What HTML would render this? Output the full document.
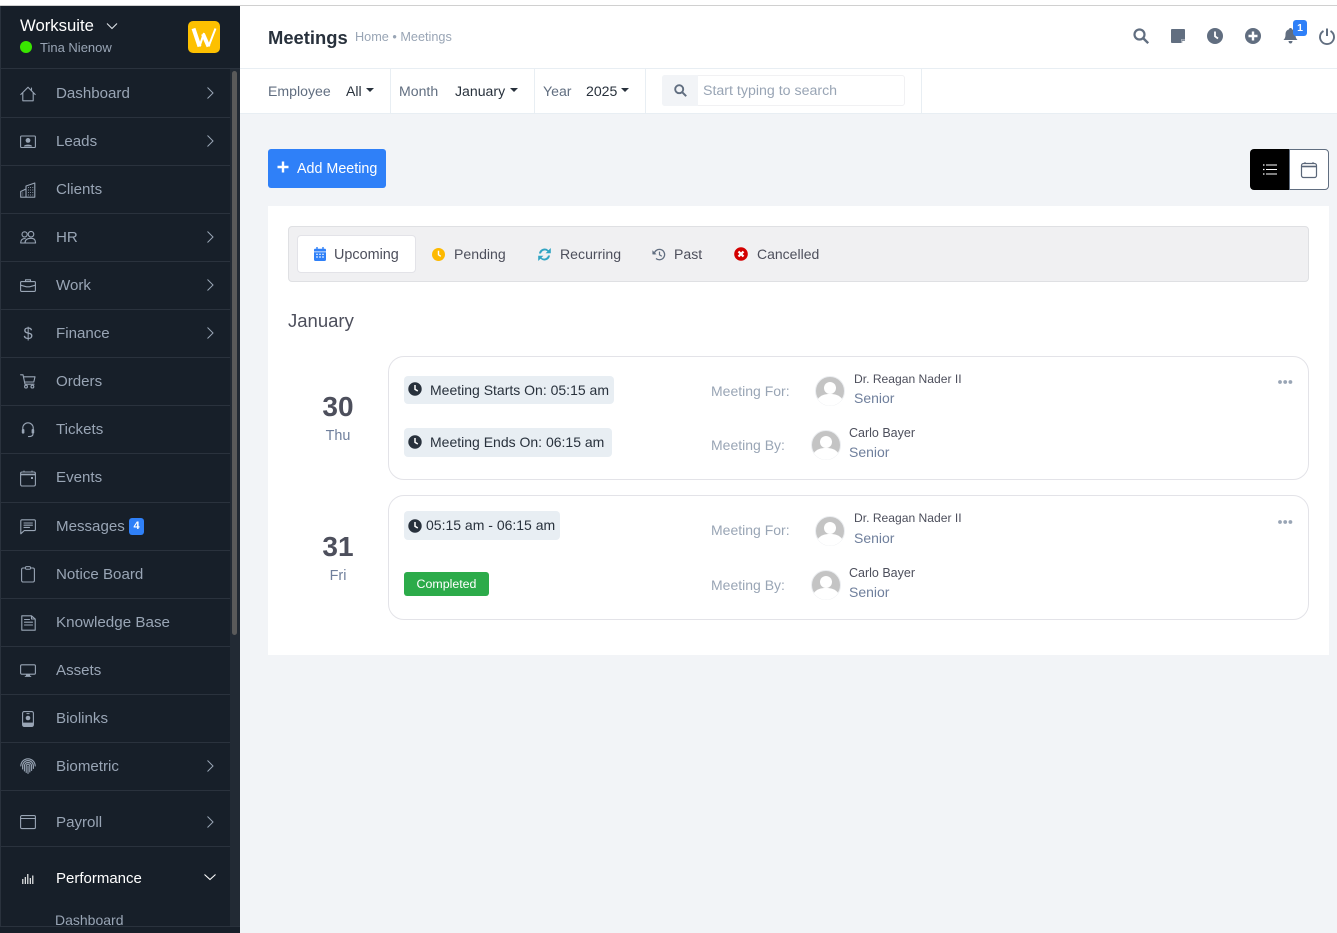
<!DOCTYPE html>
<html><head><meta charset="utf-8"><title>Meetings</title>
<style>
html,body{margin:0;padding:0;background:#f2f4f7}
body{width:1337px;height:933px;overflow:hidden;position:relative;font-family:"Liberation Sans",sans-serif}
.a{position:absolute}
.t{position:absolute;white-space:nowrap;line-height:20px;height:20px}
svg{position:absolute;overflow:visible}
.nav{color:#99a5b5;font-size:15.1px;left:56px;margin-top:1px}
.dv{position:absolute;left:0;width:230px;height:1px;background:#2a323d}
.ic{fill:none;stroke:#99a5b5;stroke-width:1.1;stroke-linecap:round;stroke-linejoin:round}
.ch{fill:none;stroke:#99a5b5;stroke-width:1}
.f{font-size:14.1px;color:#616e80}
.v{font-size:14.1px;color:#28313c}
.caret{position:absolute;width:0;height:0;border-left:4px solid transparent;border-right:4px solid transparent;border-top:4px solid #28313c}
.sep{position:absolute;top:69px;height:44px;width:1px;background:#e8eef3}
.tb{font-size:14.1px;color:#4d4f5c}
.pill{position:absolute;left:404px;background:#e8eef3;border-radius:4px}
.card{position:absolute;left:388px;width:919px;border:1px solid #e3e3e8;border-radius:16px;background:#fff}
.lb{font-size:14px;color:#99a5b5}
.nm{font-size:12.1px;color:#4d4f5c}
.nb{font-size:12.5px;color:#4d4f5c}
.sn{font-size:14px;color:#6f7f9c}
.ptx{font-size:14px;color:#28313c}
.dt{margin-top:1px}
</style></head><body>
<div class="a" style="left:0;top:0;width:1337px;height:6px;background:#fff;border-bottom:1px solid #d0d0d0;box-sizing:border-box"></div>
<div class="a" style="left:240px;top:6px;width:1097px;height:62px;background:#fff"></div>
<div class="a" style="left:240px;top:68px;width:1097px;height:1px;background:#e8eef3"></div>
<div class="a" style="left:240px;top:69px;width:1097px;height:44px;background:#fff"></div>
<div class="a" style="left:240px;top:113px;width:1097px;height:1px;background:#e8eef3"></div>

<!-- sidebar -->
<div class="a" style="left:0;top:6px;width:240px;height:927px;background:#171f29"></div>
<div class="a" style="left:0;top:6px;width:1px;height:927px;background:#2a323d"></div>
<div class="a" style="left:230px;top:69px;width:10px;height:857px;background:#222a34"></div>
<div class="a" style="left:232px;top:71px;width:5px;height:564px;background:#5a5a5a;border-radius:3px"></div>
<div class="a" style="left:0;top:68px;width:240px;height:1px;background:#2a323d"></div>
<div class="a" style="left:0;top:926px;width:240px;height:1px;background:#2a323d"></div>
<div class="a" style="left:0;top:927px;width:240px;height:6px;background:#171f29"></div>

<div class="t" style="left:20px;top:16px;color:#fff;font-size:16.7px;">Worksuite</div>
<svg style="left:106px;top:22px" width="12" height="8"><path d="M1 1.5L6 6.5L11 1.5" fill="none" stroke="#dfe3e8" stroke-width="1.1"/></svg>
<div class="a" style="left:20px;top:41px;width:12px;height:12px;border-radius:50%;background:#39e500"></div>
<div class="t" style="left:40px;top:38px;color:#99a5b5;font-size:13px">Tina Nienow</div>
<div class="a" style="left:188px;top:21px;width:32px;height:32px;border-radius:5px;background:#fdc000"></div>
<svg style="left:188px;top:21px" width="32" height="32"><path d="M5.500 7.500L11.500 25.500M15 13L20.500 25.500" fill="none" stroke="#fff" stroke-width="4"/><path d="M11.500 25.500L16 12M20.500 25.500L27.500 7.500" fill="none" stroke="#fff" stroke-width="2"/></svg>

<div class="dv" style="top:117px"></div><div class="dv" style="top:165px"></div><div class="dv" style="top:213px"></div><div class="dv" style="top:261px"></div><div class="dv" style="top:309px"></div><div class="dv" style="top:357px"></div><div class="dv" style="top:405px"></div><div class="dv" style="top:453px"></div><div class="dv" style="top:502px"></div><div class="dv" style="top:550px"></div><div class="dv" style="top:598px"></div><div class="dv" style="top:646px"></div><div class="dv" style="top:694px"></div><div class="dv" style="top:742px"></div><div class="dv" style="top:790px"></div><div class="dv" style="top:846px"></div>

<div class="t nav" style="top:83px">Dashboard</div>
<div class="t nav" style="top:131px">Leads</div>
<div class="t nav" style="top:179px">Clients</div>
<div class="t nav" style="top:227px">HR</div>
<div class="t nav" style="top:275px">Work</div>
<div class="t nav" style="top:323px">Finance</div>
<div class="t nav" style="top:371px">Orders</div>
<div class="t nav" style="top:419px">Tickets</div>
<div class="t nav" style="top:467px">Events</div>
<div class="t nav" style="top:516px">Messages</div>
<div class="a" style="left:129px;top:518px;width:15px;height:17px;border-radius:3px;background:#2f80f8;color:#fff;font-size:11px;font-weight:bold;text-align:center;line-height:17px">4</div>
<div class="t nav" style="top:564px">Notice Board</div>
<div class="t nav" style="top:612px;font-size:15.2px">Knowledge Base</div>
<div class="t nav" style="top:660px">Assets</div>
<div class="t nav" style="top:708px">Biolinks</div>
<div class="t nav" style="top:756px">Biometric</div>
<div class="t nav" style="top:812px">Payroll</div>
<div class="t" style="left:56px;top:869px;font-size:15px;color:#fff">Performance</div>
<div class="t" style="left:55px;top:910px;font-size:14px;color:#99a5b5;height:16px;line-height:20px;overflow:hidden">Dashboard</div>

<!-- chevrons -->
<svg style="left:206px;top:87px" width="8" height="12"><path class="ch" d="M1.500 .5L7 6L1.500 11.500"/></svg>
<svg style="left:206px;top:135px" width="8" height="12"><path class="ch" d="M1.500 .5L7 6L1.500 11.500"/></svg>
<svg style="left:206px;top:231px" width="8" height="12"><path class="ch" d="M1.500 .5L7 6L1.500 11.500"/></svg>
<svg style="left:206px;top:279px" width="8" height="12"><path class="ch" d="M1.500 .5L7 6L1.500 11.500"/></svg>
<svg style="left:206px;top:327px" width="8" height="12"><path class="ch" d="M1.500 .5L7 6L1.500 11.500"/></svg>
<svg style="left:206px;top:760px" width="8" height="12"><path class="ch" d="M1.500 .5L7 6L1.500 11.500"/></svg>
<svg style="left:206px;top:816px" width="8" height="12"><path class="ch" d="M1.500 .5L7 6L1.500 11.500"/></svg>
<svg style="left:204px;top:873px" width="12" height="8"><path d="M.5 1.500L6 6.500L11.500 1.500" fill="none" stroke="#fff" stroke-width="1.100"/></svg>

<!-- nav icons -->
<svg style="left:20px;top:86px" width="16" height="16"><path class="ic" d="M.8 8.500L8 1.200L15.200 8.500M2.800 7V14.800H13.200V7M11.500 2V4.500"/></svg>
<svg style="left:20px;top:135px" width="16" height="14"><rect class="ic" x=".6" y="1" width="14.800" height="11.500" rx="1"/><circle cx="8" cy="5.400" r="2.400" fill="#99a5b5"/><path d="M3.800 11.500C4 9 12 9 12.200 11.500Z" fill="#99a5b5"/></svg>
<svg style="left:20px;top:182px" width="16" height="16"><path class="ic" d="M.7 15.200V9.500L6 7V15.200H.7ZM6 15.200V4L14.800 1V15.200H6Z"/><path d="M8 5.500h.8M10.200 5.500h.8M12.400 5.500h.8M8 8h.8M10.200 8h.8M12.400 8h.8M8 10.500h.8M10.200 10.500h.8M12.400 10.500h.8M8 13h.8M10.200 13h.8M12.400 13h.8M2.400 11h.8M2.400 13h.8" stroke="#99a5b5" stroke-width="1.100"/></svg>
<svg style="left:20px;top:231px" width="16" height="13"><circle class="ic" cx="4.600" cy="3.400" r="2.600"/><circle class="ic" cx="11" cy="3.200" r="2.800"/><path class="ic" d="M.7 11.800C.7 8.500 2.500 7.500 5.200 7.500M5 12C5 8.500 7.500 7.300 11 7.300S15.400 9 15.600 12H.7"/></svg>
<svg style="left:20px;top:279px" width="16" height="13"><rect class="ic" x=".6" y="2.600" width="14.800" height="9.800" rx="1"/><path class="ic" d="M5.500 2.600V.8H10.500V2.600M.6 6.200L6.500 7.800H9.500L15.400 6.200"/></svg>
<div class="t" style="left:23.500px;top:324px;font-size:16.500px;color:#99a5b5">$</div>
<svg style="left:20px;top:374px" width="16" height="15"><path class="ic" d="M.6 .8H3L5 10.200H14M3.500 2.800H15L13.800 8H4.500"/><circle class="ic" cx="6" cy="12.600" r="1.400"/><circle class="ic" cx="12.400" cy="12.600" r="1.400"/></svg>
<svg style="left:21px;top:422px" width="14" height="16"><path class="ic" d="M1.800 8V6A5.200 5.200 0 0 1 12.200 6V8M12 12C12 14 10 14.600 7.500 14.600"/><rect x=".8" y="7" width="2.600" height="4.600" rx="1" fill="#99a5b5"/><rect x="10.600" y="7" width="2.600" height="4.600" rx="1" fill="#99a5b5"/></svg>
<svg style="left:20px;top:470px" width="16" height="17"><rect class="ic" x=".6" y="2" width="14.800" height="14" rx="1.500"/><path d="M.6 4.500H15.400" stroke="#99a5b5" stroke-width="1.600"/><path d="M4 .6V2M12 .6V2" stroke="#99a5b5"/><rect x="11" y="7" width="2" height="2" fill="#99a5b5"/></svg>
<svg style="left:20px;top:519px" width="16" height="16"><path class="ic" d="M2 .8H14.200C15 .8 15.400 1.200 15.400 2V10.400C15.400 11.200 15 11.600 14.200 11.600H4.200L.8 14.800V2C.8 1.200 1.200 .8 2 .8ZM4 4H12.400M4 6.200H12.400M4 8.400H9.500"/></svg>
<svg style="left:21px;top:566px" width="14" height="17"><rect class="ic" x=".6" y="2" width="12.800" height="14" rx="1.500"/><rect x="4.500" y=".6" width="5" height="2.600" rx="1" fill="#171f29" stroke="#99a5b5" stroke-width="1"/></svg>
<svg style="left:20.500px;top:615px" width="15" height="16"><path class="ic" d="M.8 .8H10.500L14.200 4V15.200H.8ZM10.500 .8V4H14.200M3.500 4.500H8.500M3.500 7.200H11.500M3.500 10H11.500"/></svg>
<svg style="left:20px;top:664px" width="16" height="14"><rect class="ic" x=".6" y=".8" width="14.800" height="9.400" rx="1.200"/><path d="M6.500 10.500H9.500V12H6.500ZM4.800 12.400H11.200" stroke="#99a5b5" fill="#99a5b5" stroke-width="1"/></svg>
<svg style="left:22px;top:711px" width="12" height="16"><rect class="ic" x=".6" y=".6" width="10.800" height="14.800" rx="1.600"/><circle cx="6" cy="7" r="2.300" fill="#99a5b5"/><rect x="1" y="11.600" width="10" height="3.400" fill="#99a5b5"/><path d="M4.500 2.600H7.500" stroke="#99a5b5"/></svg>
<svg style="left:20px;top:758px" width="16" height="16"><g class="ic" stroke-width="1"><path d="M.8 8A7.200 7.200 0 0 1 15.200 8"/><path d="M2.600 11V8A5.400 5.400 0 0 1 13.400 8V10.500"/><path d="M4.400 13V8A3.600 3.600 0 0 1 11.600 8V12.500"/><path d="M6.200 14.500V8A1.800 1.800 0 0 1 9.800 8V14"/><path d="M8 8V15.500"/></g></svg>
<svg style="left:20px;top:815px" width="16" height="14"><rect class="ic" x=".6" y=".6" width="14.800" height="13" rx="1.200"/><path class="ic" d="M.6 3.500H15.400"/></svg>
<svg style="left:22px;top:873px" width="12" height="12"><path d="M.8 6V11M3.300 4V11M5.800 1V11M8.300 5V11M10.800 2.500V11" stroke="#fff" stroke-width="1.100" fill="none"/></svg>

<!-- header -->
<div class="t" style="left:268px;top:28px;font-size:18.400px;font-weight:bold;color:#28313c">Meetings</div>
<div class="t" style="left:355px;top:27px;font-size:12.700px;color:#99a5b5">Home • Meetings</div>

<svg style="left:1133px;top:28px" width="16" height="16"><circle cx="6.500" cy="6.500" r="5" fill="none" stroke="#616e80" stroke-width="2.200"/><path d="M10.500 10.500L15.200 15.200" stroke="#616e80" stroke-width="2.400"/></svg>
<svg style="left:1171px;top:29px" width="14" height="14"><path d="M1 0H13C13.600 0 14 .4 14 1V14H1C.4 14 0 13.600 0 13V1C0 .4 .4 0 1 0Z" fill="#616e80"/><path d="M10 14V10.500H14V14Z" fill="#fff"/><path d="M10.800 14V11.300H14" fill="none" stroke="#616e80" stroke-width=".8"/></svg>
<svg style="left:1207px;top:28px" width="16" height="16"><circle cx="8" cy="8" r="8" fill="#616e80"/><path d="M8 3.500V8.300L11 10.500" stroke="#fff" stroke-width="1.800" fill="none"/></svg>
<svg style="left:1245px;top:28px" width="16" height="16"><circle cx="8" cy="8" r="8" fill="#616e80"/><path d="M8 3.500V12.500M3.500 8H12.500" stroke="#fff" stroke-width="2.400"/></svg>
<svg style="left:1283px;top:28px" width="15" height="16"><path d="M7.500 0C8.500 0 9 .6 9 1.400C11.500 2 12.500 4 12.500 6.500C12.500 9.500 13.300 10.800 14.500 12H.5C1.700 10.800 2.500 9.500 2.500 6.500C2.500 4 3.500 2 6 1.400C6 .6 6.500 0 7.500 0ZM5.500 13H9.500C9.500 14.500 8.500 15.500 7.500 15.500S5.500 14.500 5.500 13Z" fill="#616e80"/></svg>
<div class="a" style="left:1293px;top:20px;width:14px;height:16px;background:#2f80f8;border-radius:3px;color:#fff;font-size:10.500px;font-weight:bold;text-align:center;line-height:16px">1</div>
<svg style="left:1319px;top:28px" width="16" height="16"><path d="M4.500 3A7 7 0 1 0 11.500 3" fill="none" stroke="#616e80" stroke-width="1.900"/><path d="M8 .5V8" stroke="#616e80" stroke-width="2"/></svg>

<!-- filter bar -->
<div class="sep" style="left:390px"></div><div class="sep" style="left:534px"></div><div class="sep" style="left:645px"></div><div class="sep" style="left:921px"></div>
<div class="t f" style="left:268px;top:81px">Employee</div>
<div class="t v" style="left:346px;top:81px">All</div><div class="caret" style="left:366px;top:88px"></div>
<div class="t f" style="left:399px;top:81px">Month</div>
<div class="t v" style="left:455px;top:81px">January</div><div class="caret" style="left:510px;top:88px"></div>
<div class="t f" style="left:543px;top:81px">Year</div>
<div class="t v" style="left:586px;top:81px">2025</div><div class="caret" style="left:621px;top:88px"></div>
<div class="a" style="left:662px;top:75px;width:243px;height:31px;box-sizing:border-box;border:1px solid #f1f1f3;border-radius:3px;background:#fff"></div>
<div class="a" style="left:662px;top:75px;width:36px;height:31px;background:#f2f4f7;border-radius:3px 0 0 3px"></div>
<svg style="left:674px;top:84px" width="13" height="13"><circle cx="5.200" cy="5.200" r="4" fill="none" stroke="#616e80" stroke-width="1.900"/><path d="M8.200 8.200L12.200 12.200" stroke="#616e80" stroke-width="2"/></svg>
<div class="t" style="left:703px;top:81px;font-size:14.200px;color:#99a5b5">Start typing to search</div>

<!-- actions -->
<div class="a" style="left:268px;top:149px;width:118px;height:39px;background:#2f80f8;border-radius:3px"></div>
<svg style="left:277px;top:161px" width="12" height="12"><path d="M6 .5V11.500M.5 6H11.500" stroke="#fff" stroke-width="2.400"/></svg>
<div class="t" style="left:297px;top:159px;font-size:14.300px;color:#fff">Add Meeting</div>
<div class="a" style="left:1250px;top:149px;width:40px;height:41px;background:#000;border-radius:4px 0 0 4px"></div>
<div class="a" style="left:1289px;top:149px;width:40px;height:41px;box-sizing:border-box;background:#fff;border:1px solid #616e80;border-radius:0 4px 4px 0"></div>
<svg style="left:1263px;top:164px" width="14" height="11"><path d="M3 1H14M3 5.500H14M3 10H14" stroke="#fff" stroke-width="1"/><path d="M0 1H1.500M0 5.500H1.500M0 10H1.500" stroke="#fff" stroke-width="1.200"/></svg>
<svg style="left:1301px;top:162px" width="16" height="16"><rect x=".5" y="1.500" width="15" height="14" rx="2" fill="none" stroke="#5a6678" stroke-width="1.200"/><path d="M.5 4.500H15.500" stroke="#5a6678" stroke-width="1.600"/><path d="M4 0V2M12 0V2" stroke="#5a6678"/></svg>

<!-- main card -->
<div class="a" style="left:268px;top:206px;width:1061px;height:449px;background:#fff"></div>
<div class="a" style="left:288px;top:226px;width:1021px;height:56px;box-sizing:border-box;background:#f0f0f2;border:1px solid #dfe0e3;border-radius:4px"></div>
<div class="a" style="left:297px;top:235px;width:119px;height:38px;box-sizing:border-box;background:#fff;border:1px solid #e3e3e8;border-radius:4px"></div>
<svg style="left:314px;top:247px" width="12" height="14"><path d="M0 3C0 2 .5 1.800 1.500 1.800H10.500C11.500 1.800 12 2 12 3V4.500H0ZM0 5.200H12V12.500C12 13.500 11.500 14 10.500 14H1.500C.5 14 0 13.500 0 12.500Z" fill="#2f80f8"/><path d="M3 0V2M9 0V2" stroke="#2f80f8" stroke-width="1.400"/><path d="M2.200 7.300h1.600M5.200 7.300h1.600M8.200 7.300h1.600M2.200 10h1.600M5.200 10h1.600M8.200 10h1.600" stroke="#fff" stroke-width="1.200"/></svg>
<div class="t tb" style="left:334px;top:245px;font-size:14.400px">Upcoming</div>
<svg style="left:432px;top:247.500px" width="13" height="13"><circle cx="6.500" cy="6.500" r="6.500" fill="#fdb900"/><path d="M6.500 2.800V6.800L8.800 8.300" stroke="#fff" stroke-width="1.400" fill="none"/></svg>
<div class="t tb" style="left:454px;top:244px">Pending</div>
<svg style="left:537px;top:246.500px" width="15" height="15"><path d="M2 6.500A5.600 5.600 0 0 1 11.500 3.200L13.800 1V6.200H8.600L10.500 4.400A4 4 0 0 0 4 6.500ZM13 8.500A5.600 5.600 0 0 1 3.500 11.800L1.200 14V8.800H6.400L4.500 10.600A4 4 0 0 0 11 8.500Z" fill="#31a4c3"/></svg>
<div class="t tb" style="left:560px;top:244px">Recurring</div>
<svg style="left:652px;top:247.500px" width="14" height="13"><path d="M2.200 6.500A5.200 5.200 0 1 1 4 10.500" fill="none" stroke="#616e80" stroke-width="1.300"/><path d="M0 2V6.200H4.200Z" fill="#616e80" transform="translate(.4 .2)"/><path d="M7.500 3.600V6.800L9.800 8.300" stroke="#616e80" stroke-width="1.200" fill="none"/></svg>
<div class="t tb" style="left:674px;top:244px">Past</div>
<svg style="left:734px;top:246.500px" width="14" height="14"><circle cx="7" cy="7" r="6.800" fill="#d30000"/><path d="M4.500 4.500L9.500 9.500M9.500 4.500L4.500 9.500" stroke="#fff" stroke-width="2.200"/></svg>
<div class="t tb" style="left:757px;top:244px;font-size:14px">Cancelled</div>

<div class="t" style="left:288px;top:311px;font-size:18.500px;color:#4d4f5c">January</div>

<!-- date column -->
<div class="t dt" style="left:288px;width:100px;top:396px;text-align:center;font-size:28px;font-weight:bold;color:#4d4f5c">30</div>
<div class="t dt" style="left:288px;width:100px;top:425px;text-align:center;font-size:14.400px;color:#6f7f9c">Thu</div>
<div class="t dt" style="left:288px;width:100px;top:536px;text-align:center;font-size:28px;font-weight:bold;color:#4d4f5c">31</div>
<div class="t dt" style="left:288px;width:100px;top:565px;text-align:center;font-size:14.400px;color:#6f7f9c">Fri</div>

<div class="card" style="top:356px;height:122px"></div>
<div class="card" style="top:495px;height:123px"></div>

<div class="pill" style="top:376px;width:210px;height:28px"></div>
<div class="pill" style="top:428px;width:208px;height:29px"></div>
<div class="pill" style="top:511px;width:156px;height:29px"></div>
<svg style="left:408px;top:382px" width="14" height="14"><circle cx="7" cy="7" r="6.700" fill="#28313c"/><path d="M7 3V7.300L9.800 9" stroke="#fff" stroke-width="1.500" fill="none"/></svg>
<svg style="left:408px;top:435px" width="14" height="14"><circle cx="7" cy="7" r="6.700" fill="#28313c"/><path d="M7 3V7.300L9.800 9" stroke="#fff" stroke-width="1.500" fill="none"/></svg>
<svg style="left:408px;top:519px" width="14" height="14"><circle cx="7" cy="7" r="6.700" fill="#28313c"/><path d="M7 3V7.300L9.800 9" stroke="#fff" stroke-width="1.500" fill="none"/></svg>
<div class="t ptx" style="left:430px;top:380px">Meeting Starts On: 05:15 am</div>
<div class="t ptx" style="left:430px;top:432px">Meeting Ends On: 06:15 am</div>
<div class="t ptx" style="left:426px;top:515px">05:15 am - 06:15 am</div>
<div class="a" style="left:404px;top:572px;width:85px;height:24px;background:#2cab4a;border-radius:3px;color:#fff;font-size:12.400px;text-align:center;line-height:24px">Completed</div>

<div class="t lb" style="left:711px;top:381px">Meeting For:</div>
<div class="t lb" style="left:711px;top:435px">Meeting By:</div>
<div class="t lb" style="left:711px;top:520px">Meeting For:</div>
<div class="t lb" style="left:711px;top:575px">Meeting By:</div>

<svg style="left:815px;top:376px" width="30" height="30"><circle cx="15" cy="15" r="14.500" fill="#c4c4c4" stroke="#eceef1"/><circle cx="15" cy="12" r="6" fill="#fff"/><path d="M2.800 23C6 19 10 18 15 18S24 19 27.200 23A14.500 14.500 0 0 1 2.800 23Z" fill="#fff"/></svg>
<svg style="left:811px;top:430px" width="30" height="30"><circle cx="15" cy="15" r="14.500" fill="#c4c4c4" stroke="#eceef1"/><circle cx="15" cy="12" r="6" fill="#fff"/><path d="M2.800 23C6 19 10 18 15 18S24 19 27.200 23A14.500 14.500 0 0 1 2.800 23Z" fill="#fff"/></svg>
<svg style="left:815px;top:516px" width="30" height="30"><circle cx="15" cy="15" r="14.500" fill="#c4c4c4" stroke="#eceef1"/><circle cx="15" cy="12" r="6" fill="#fff"/><path d="M2.800 23C6 19 10 18 15 18S24 19 27.200 23A14.500 14.500 0 0 1 2.800 23Z" fill="#fff"/></svg>
<svg style="left:811px;top:570px" width="30" height="30"><circle cx="15" cy="15" r="14.500" fill="#c4c4c4" stroke="#eceef1"/><circle cx="15" cy="12" r="6" fill="#fff"/><path d="M2.800 23C6 19 10 18 15 18S24 19 27.200 23A14.500 14.500 0 0 1 2.800 23Z" fill="#fff"/></svg>

<div class="t nm" style="left:854px;top:369px">Dr. Reagan Nader II</div>
<div class="t sn" style="left:854px;top:388px">Senior</div>
<div class="t nb" style="left:849px;top:423px">Carlo Bayer</div>
<div class="t sn" style="left:849px;top:442px">Senior</div>
<div class="t nm" style="left:854px;top:508px">Dr. Reagan Nader II</div>
<div class="t sn" style="left:854px;top:528px">Senior</div>
<div class="t nb" style="left:849px;top:563px">Carlo Bayer</div>
<div class="t sn" style="left:849px;top:582px">Senior</div>

<svg style="left:1278px;top:380px" width="15" height="4"><circle cx="2" cy="2" r="1.900" fill="#99a5b5"/><circle cx="7.200" cy="2" r="1.900" fill="#99a5b5"/><circle cx="12.400" cy="2" r="1.900" fill="#99a5b5"/></svg>
<svg style="left:1278px;top:520px" width="15" height="4"><circle cx="2" cy="2" r="1.900" fill="#99a5b5"/><circle cx="7.200" cy="2" r="1.900" fill="#99a5b5"/><circle cx="12.400" cy="2" r="1.900" fill="#99a5b5"/></svg>
</body></html>
